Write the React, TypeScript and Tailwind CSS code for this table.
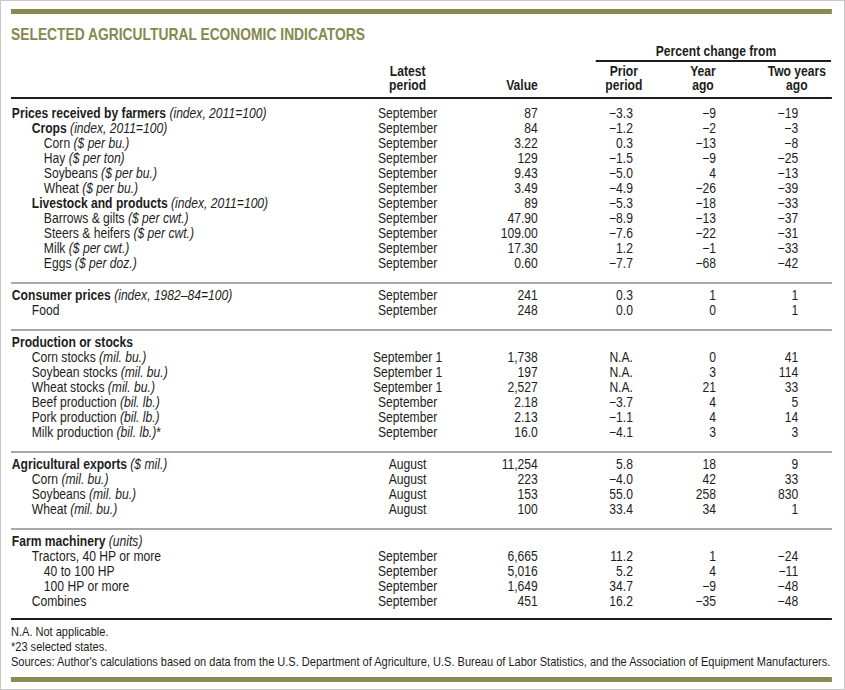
type Row = {
  label: string;
  unit?: string;
  suffix?: string;
  bold?: boolean;
  level: 0 | 1 | 2;
  period?: string;
  value?: string;
  prior?: string;
  year?: string;
  two?: string;
};

const S = "September";

const sections: Row[][] = [
  [
    { label: "Prices received by farmers", unit: "(index, 2011=100)", bold: true, level: 0, period: S, value: "87", prior: "−3.3", year: "−9", two: "−19" },
    { label: "Crops", unit: "(index, 2011=100)", bold: true, level: 1, period: S, value: "84", prior: "−1.2", year: "−2", two: "−3" },
    { label: "Corn", unit: "($ per bu.)", level: 2, period: S, value: "3.22", prior: "0.3", year: "−13", two: "−8" },
    { label: "Hay", unit: "($ per ton)", level: 2, period: S, value: "129", prior: "−1.5", year: "−9", two: "−25" },
    { label: "Soybeans", unit: "($ per bu.)", level: 2, period: S, value: "9.43", prior: "−5.0", year: "4", two: "−13" },
    { label: "Wheat", unit: "($ per bu.)", level: 2, period: S, value: "3.49", prior: "−4.9", year: "−26", two: "−39" },
    { label: "Livestock and products", unit: "(index, 2011=100)", bold: true, level: 1, period: S, value: "89", prior: "−5.3", year: "−18", two: "−33" },
    { label: "Barrows & gilts", unit: "($ per cwt.)", level: 2, period: S, value: "47.90", prior: "−8.9", year: "−13", two: "−37" },
    { label: "Steers & heifers", unit: "($ per cwt.)", level: 2, period: S, value: "109.00", prior: "−7.6", year: "−22", two: "−31" },
    { label: "Milk", unit: "($ per cwt.)", level: 2, period: S, value: "17.30", prior: "1.2", year: "−1", two: "−33" },
    { label: "Eggs", unit: "($ per doz.)", level: 2, period: S, value: "0.60", prior: "−7.7", year: "−68", two: "−42" },
  ],
  [
    { label: "Consumer prices", unit: "(index, 1982–84=100)", bold: true, level: 0, period: S, value: "241", prior: "0.3", year: "1", two: "1" },
    { label: "Food", level: 1, period: S, value: "248", prior: "0.0", year: "0", two: "1" },
  ],
  [
    { label: "Production or stocks", bold: true, level: 0 },
    { label: "Corn stocks", unit: "(mil. bu.)", level: 1, period: "September 1", value: "1,738", prior: "N.A.", year: "0", two: "41" },
    { label: "Soybean stocks", unit: "(mil. bu.)", level: 1, period: "September 1", value: "197", prior: "N.A.", year: "3", two: "114" },
    { label: "Wheat stocks", unit: "(mil. bu.)", level: 1, period: "September 1", value: "2,527", prior: "N.A.", year: "21", two: "33" },
    { label: "Beef production", unit: "(bil. lb.)", level: 1, period: S, value: "2.18", prior: "−3.7", year: "4", two: "5" },
    { label: "Pork production", unit: "(bil. lb.)", level: 1, period: S, value: "2.13", prior: "−1.1", year: "4", two: "14" },
    { label: "Milk production", unit: "(bil. lb.)", suffix: "*", level: 1, period: S, value: "16.0", prior: "−4.1", year: "3", two: "3" },
  ],
  [
    { label: "Agricultural exports", unit: "($ mil.)", bold: true, level: 0, period: "August", value: "11,254", prior: "5.8", year: "18", two: "9" },
    { label: "Corn", unit: "(mil. bu.)", level: 1, period: "August", value: "223", prior: "−4.0", year: "42", two: "33" },
    { label: "Soybeans", unit: "(mil. bu.)", level: 1, period: "August", value: "153", prior: "55.0", year: "258", two: "830" },
    { label: "Wheat", unit: "(mil. bu.)", level: 1, period: "August", value: "100", prior: "33.4", year: "34", two: "1" },
  ],
  [
    { label: "Farm machinery", unit: "(units)", bold: true, level: 0 },
    { label: "Tractors, 40 HP or more", level: 1, period: S, value: "6,665", prior: "11.2", year: "1", two: "−24" },
    { label: "40 to 100 HP", level: 2, period: S, value: "5,016", prior: "5.2", year: "4", two: "−11" },
    { label: "100 HP or more", level: 2, period: S, value: "1,649", prior: "34.7", year: "−9", two: "−48" },
    { label: "Combines", level: 1, period: S, value: "451", prior: "16.2", year: "−35", two: "−48" },
  ],
];

// horizontal sizes are in "unscaled" px; the sheet is squeezed to 86.5% to mimic a condensed face
const indent = ["pl-[1px]", "pl-[24px]", "pl-[38px]"];

function DataRow({ row }: { row: Row }) {
  return (
    <div className="grid grid-cols-[403px_111px_95px_110px_96px_95px] h-[15px] leading-[15px] whitespace-nowrap">
      <div className={indent[row.level]}>
        <span className={row.bold ? "font-bold" : ""}>{row.label}</span>
        {row.unit && <span className="italic"> {row.unit}</span>}
        {row.suffix}
      </div>
      <div className="text-center">{row.period}</div>
      <div className="text-right">{row.value}</div>
      <div className="text-right">{row.prior}</div>
      <div className="text-right">{row.year}</div>
      <div className="text-right">{row.two}</div>
    </div>
  );
}

export default function App() {
  return (
    <div className="w-[845px] h-[690px] overflow-hidden border border-[#c8c8c8] bg-white pl-[10px] pt-[8px] text-[#1d1d1b] font-['Liberation_Sans',Arial,sans-serif]">
      <div className="w-[949px] origin-left scale-x-[0.865] text-[14px]">
        <div className="h-[5px] bg-[#8a8b53]" />
        <h1 className="mt-[12px] origin-left scale-x-[0.94] text-[17px] leading-[18px] font-bold text-[#86884d]">
          SELECTED AGRICULTURAL ECONOMIC INDICATORS
        </h1>

        {/* column heads */}
        <div className="flex justify-end pr-[1px]">
          <div className="w-[272px]">
            <div className="pl-[6px] text-center font-bold leading-[15px]">Percent change from</div>
            <div className="mt-[1px] h-[2px] bg-[#1d1d1b]" />
          </div>
        </div>
        <div className="mt-[2px] grid grid-cols-[403px_111px_95px_53px_93px_90px_23px_81px] font-bold whitespace-nowrap">
          <div />
          <div className="text-center">
            <div className="h-[14px] leading-[14px]">Latest</div>
            <div className="h-[14px] leading-[14px]">period</div>
          </div>
          <div className="self-end h-[14px] leading-[14px] text-right">Value</div>
          <div />
          <div className="text-center">
            <div className="h-[14px] leading-[14px]">Prior</div>
            <div className="h-[14px] leading-[14px]">period</div>
          </div>
          <div className="text-center">
            <div className="h-[14px] leading-[14px]">Year</div>
            <div className="h-[14px] leading-[14px]">ago</div>
          </div>
          <div />
          <div className="text-center">
            <div className="h-[14px] leading-[14px]">Two years</div>
            <div className="h-[14px] leading-[14px]">ago</div>
          </div>
        </div>
        <div className="mt-[5px] h-[2px] bg-[#1d1d1b]" />

        {sections.map((rows, i) => (
          <div
            key={i}
            className={
              i === 0
                ? "pt-[7px] pb-[11px]"
                : i === sections.length - 1
                  ? "border-t-2 border-[#a8a8a8] pt-[4px] pb-[9px]"
                  : "border-t-2 border-[#a8a8a8] pt-[4px] pb-[11px]"
            }
          >
            {rows.map((r, j) => (
              <DataRow key={j} row={r} />
            ))}
          </div>
        ))}

        <div className="h-[2px] bg-[#1d1d1b]" />
        <div className="pt-[4px] text-[12.75px] leading-[15px] whitespace-nowrap">
          <div>N.A. Not applicable.</div>
          <div>*23 selected states.</div>
          <div>
            Sources: Author's calculations based on data from the U.S. Department of Agriculture, U.S. Bureau of
            Labor Statistics, and the Association of Equipment Manufacturers.
          </div>
        </div>
        <div className="mt-[8px] h-[5px] bg-[#8a8b53]" />
      </div>
    </div>
  );
}
